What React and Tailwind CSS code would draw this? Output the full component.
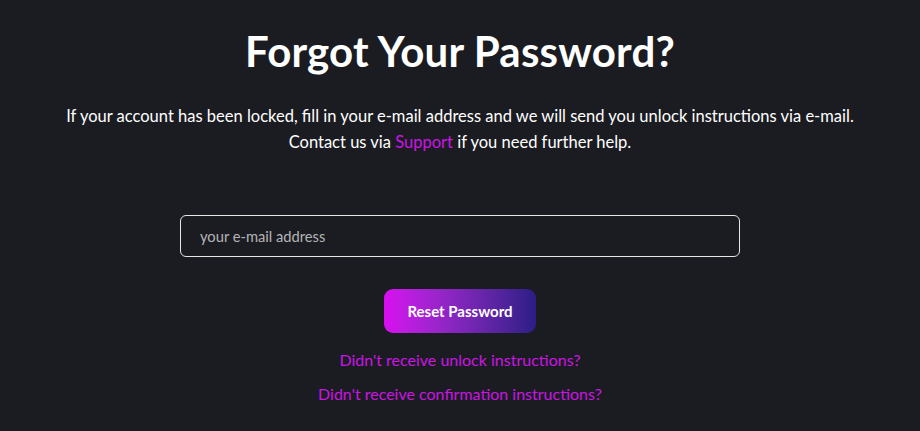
import React, { useState } from "react";

const App = () => {
    const [email, setEmail] = useState("");

    return (
        <div
            className="min-h-[431px] w-full bg-[#1b1c21] text-white flex flex-col items-center"
            style={{ fontFamily: "Lato, 'Noto Sans', sans-serif" }}
        >
            <h1 className="mt-[26px] text-[42px] font-bold leading-[50px] tracking-[0.2px]">
                Forgot Your Password?
            </h1>
            <p className="mt-[27px] text-center text-[16.5px] leading-[26px]">
                If your account has been locked, fill in your e-mail address and we will send you unlock instructions via e-mail.
                <br />
                Contact us via <a href="#" className="text-[#cc14e6]">Support</a> if you need further help.
            </p>
            <form className="mt-[60px] flex flex-col items-center" onSubmit={(e) => e.preventDefault()}>
                <input
                    type="email"
                    value={email}
                    onChange={(e) => setEmail(e.target.value)}
                    placeholder="your e-mail address"
                    className="w-[560px] h-[42px] px-[19px] bg-[#1b1c21] border border-[#e6e6e6] rounded-[6px] text-[14.7px] text-white placeholder:text-[#b4b4b8] outline-none"
                />
                <button
                    type="submit"
                    className="mt-[32px] w-[152px] h-[44px] rounded-[9px] bg-gradient-to-r from-[#d80df2] to-[#2d1d86] text-[15px] font-bold text-white"
                >
                    Reset Password
                </button>
            </form>
            <a href="#" className="mt-[14px] text-[16px] leading-[26px] text-[#cc14e6]">
                Didn't receive unlock instructions?
            </a>
            <a href="#" className="mt-[8px] text-[16px] leading-[26px] text-[#cc14e6]">
                Didn't receive confirmation instructions?
            </a>
        </div>
    );
};

export default App;
